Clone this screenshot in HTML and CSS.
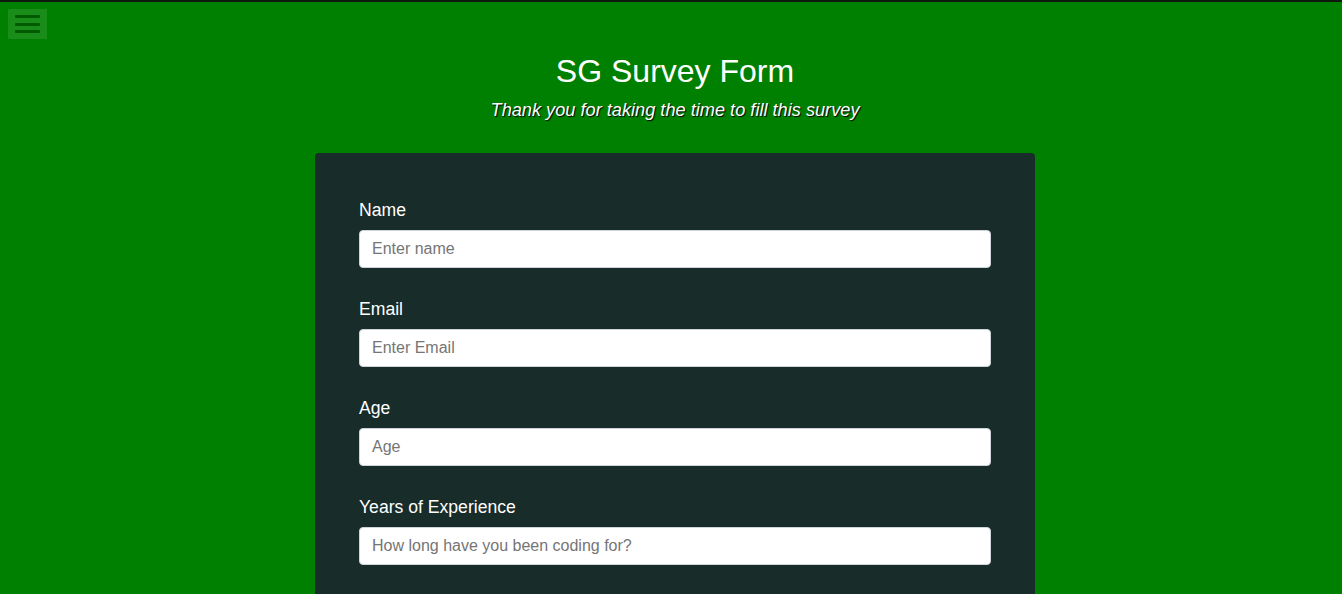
FILE: index.html
```html
<!DOCTYPE html>
<html lang="en">
<head>
<meta charset="utf-8">
<title>SG Survey Form</title>
<link rel="stylesheet" href="styles.css">
</head>
<body>
<button class="menu-btn" type="button" aria-label="Menu">
  <span class="bar"></span><span class="bar"></span><span class="bar"></span>
</button>
<main class="page">
  <header class="head">
    <h1 class="title" id="title">SG Survey Form</h1>
    <p class="subtitle" id="description">Thank you for taking the time to fill this survey</p>
  </header>
  <form class="card" id="survey-form">
    <div class="group">
      <label class="label" for="name">Name</label>
      <input class="control" id="name" type="text" placeholder="Enter name">
    </div>
    <div class="group">
      <label class="label" for="email">Email</label>
      <input class="control" id="email" type="email" placeholder="Enter Email">
    </div>
    <div class="group">
      <label class="label" for="age">Age</label>
      <input class="control" id="age" type="number" placeholder="Age">
    </div>
    <div class="group">
      <label class="label" for="exp">Years of Experience</label>
      <input class="control" id="exp" type="text" placeholder="How long have you been coding for?">
    </div>
  </form>
</main>
</body>
</html>
```
FILE: styles.css
```css
html, body {
  margin: 0;
  padding: 0;
}
body {
  background: #008000;
  border-top: 2px solid #0d1a0d;
  font-family: "Liberation Sans", Arial, sans-serif;
  color: #fff;
  min-height: 600px;
  box-sizing: border-box;
}
.menu-btn {
  position: absolute;
  left: 8px;
  top: 9px;
  width: 39px;
  height: 30px;
  padding: 6px 7px;
  border: none;
  background: #1a8c1a;
  display: flex;
  flex-direction: column;
  justify-content: space-between;
  box-sizing: border-box;
  cursor: pointer;
}
.bar {
  display: block;
  height: 3px;
  width: 25px;
  background: #005a00;
  border-radius: 1px;
}
.page {
  padding-left: 8px;
  display: flex;
  flex-direction: column;
  align-items: center;
}
.head {
  text-align: center;
  padding-top: 50px;
}
.title {
  margin: 0;
  font-size: 32px;
  font-weight: 400;
  line-height: 38px;
}
.subtitle {
  margin: 9px 0 0;
  font-size: 18.2px;
  font-style: italic;
  line-height: 22px;
  text-shadow: 1px 1px 1px #000;
}
.card {
  margin-top: 32px;
  width: 720px;
  box-sizing: border-box;
  background: #182c29;
  border-radius: 4px;
  padding: 44px 44px 20px;
}
.group {
  display: flex;
  flex-direction: column;
  margin-bottom: 28px;
}
.label {
  font-size: 17.6px;
  line-height: 26px;
  margin-bottom: 7px;
}
.control {
  height: 38px;
  box-sizing: border-box;
  padding: 6px 12px;
  font-family: "Liberation Sans", Arial, sans-serif;
  font-size: 16px;
  color: #495057;
  background: #fff;
  border: 1px solid #ced4da;
  border-radius: 4px;
}
.control::placeholder {
  color: #757575;
}
```
